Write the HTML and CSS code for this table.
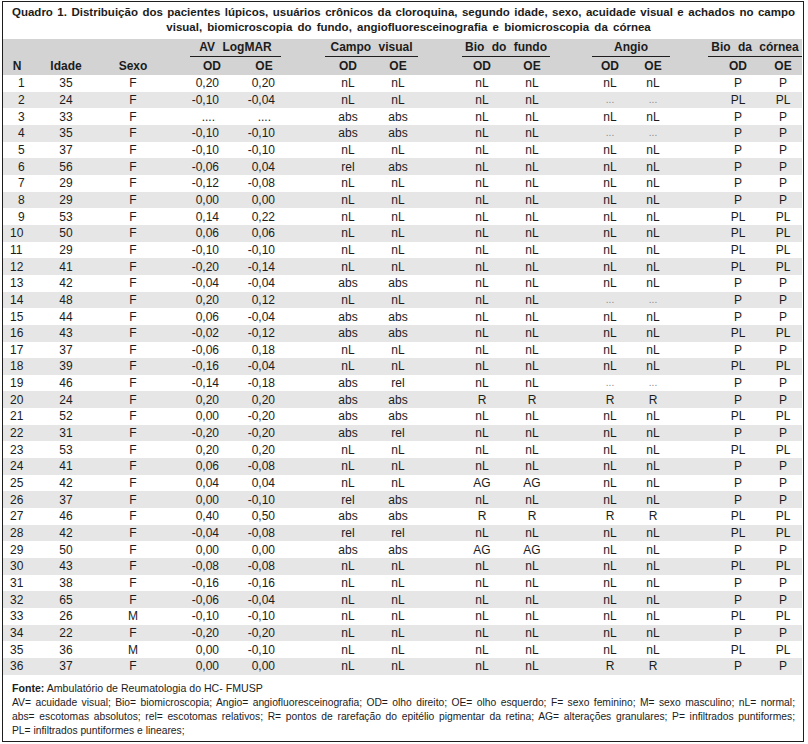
FILE: index.html
```html
<!DOCTYPE html>
<html lang="pt">
<head>
<meta charset="utf-8">
<title>Quadro 1</title>
<link rel="stylesheet" href="styles.css">
</head>
<body>
<div class="frame">
  <div class="title">
    <div class="t1">Quadro 1. Distribuição dos pacientes lúpicos, usuários crônicos da cloroquina, segundo idade, sexo, acuidade visual e achados no campo</div>
    <div class="t2">visual, biomicroscopia do fundo, angiofluoresceinografia e biomicroscopia da córnea</div>
  </div>
  <table class="data">
    <colgroup>
      <col class="w1"><col class="w2"><col class="w3"><col class="w4"><col class="w5"><col class="w6"><col class="w7"><col class="w8"><col class="w9"><col class="w10"><col class="w11"><col class="w12"><col class="w13">
    </colgroup>
    <thead>
      <tr class="ga">
        <th></th><th></th><th></th>
        <th colspan="2"><div class="grp g-av">AV LogMAR</div></th>
        <th colspan="2"><div class="grp g-cv">Campo visual</div></th>
        <th colspan="2"><div class="grp g-bf">Bio do fundo</div></th>
        <th colspan="2"><div class="grp g-an">Angio</div></th>
        <th colspan="2"><div class="grp g-bc">Bio da córnea</div></th>
      </tr>
      <tr class="gb">
        <th>N</th><th>Idade</th><th>Sexo</th>
        <th>OD</th><th>OE</th><th>OD</th><th>OE</th><th>OD</th><th>OE</th><th>OD</th><th>OE</th><th>OD</th><th>OE</th>
      </tr>
    </thead>
    <tbody>
      <tr><td class="u">1</td><td>35</td><td>F</td><td>0,20</td><td>0,20</td><td>nL</td><td>nL</td><td>nL</td><td>nL</td><td>nL</td><td>nL</td><td>P</td><td>P</td></tr>
      <tr><td class="u">2</td><td>24</td><td>F</td><td>-0,10</td><td>-0,04</td><td>nL</td><td>nL</td><td>nL</td><td>nL</td><td class="dots">...</td><td class="dots">...</td><td>PL</td><td>PL</td></tr>
      <tr><td class="u">3</td><td>33</td><td>F</td><td class="na">....</td><td class="na">....</td><td>abs</td><td>abs</td><td>nL</td><td>nL</td><td>nL</td><td>nL</td><td>P</td><td>P</td></tr>
      <tr><td class="u">4</td><td>35</td><td>F</td><td>-0,10</td><td>-0,10</td><td>abs</td><td>abs</td><td>nL</td><td>nL</td><td class="dots">...</td><td class="dots">...</td><td>P</td><td>P</td></tr>
      <tr><td class="u">5</td><td>37</td><td>F</td><td>-0,10</td><td>-0,10</td><td>nL</td><td>nL</td><td>nL</td><td>nL</td><td>nL</td><td>nL</td><td>P</td><td>P</td></tr>
      <tr><td class="u">6</td><td>56</td><td>F</td><td>-0,06</td><td>0,04</td><td>rel</td><td>abs</td><td>nL</td><td>nL</td><td>nL</td><td>nL</td><td>P</td><td>P</td></tr>
      <tr><td class="u">7</td><td>29</td><td>F</td><td>-0,12</td><td>-0,08</td><td>nL</td><td>nL</td><td>nL</td><td>nL</td><td>nL</td><td>nL</td><td>P</td><td>P</td></tr>
      <tr><td class="u">8</td><td>29</td><td>F</td><td>0,00</td><td>0,00</td><td>nL</td><td>nL</td><td>nL</td><td>nL</td><td>nL</td><td>nL</td><td>P</td><td>P</td></tr>
      <tr><td class="u">9</td><td>53</td><td>F</td><td>0,14</td><td>0,22</td><td>nL</td><td>nL</td><td>nL</td><td>nL</td><td>nL</td><td>nL</td><td>PL</td><td>PL</td></tr>
      <tr><td>10</td><td>50</td><td>F</td><td>0,06</td><td>0,06</td><td>nL</td><td>nL</td><td>nL</td><td>nL</td><td>nL</td><td>nL</td><td>PL</td><td>PL</td></tr>
      <tr><td>11</td><td>29</td><td>F</td><td>-0,10</td><td>-0,10</td><td>nL</td><td>nL</td><td>nL</td><td>nL</td><td>nL</td><td>nL</td><td>PL</td><td>PL</td></tr>
      <tr><td>12</td><td>41</td><td>F</td><td>-0,20</td><td>-0,14</td><td>nL</td><td>nL</td><td>nL</td><td>nL</td><td>nL</td><td>nL</td><td>PL</td><td>PL</td></tr>
      <tr><td>13</td><td>42</td><td>F</td><td>-0,04</td><td>-0,04</td><td>abs</td><td>abs</td><td>nL</td><td>nL</td><td>nL</td><td>nL</td><td>P</td><td>P</td></tr>
      <tr><td>14</td><td>48</td><td>F</td><td>0,20</td><td>0,12</td><td>nL</td><td>nL</td><td>nL</td><td>nL</td><td class="dots">...</td><td class="dots">...</td><td>P</td><td>P</td></tr>
      <tr><td>15</td><td>44</td><td>F</td><td>0,06</td><td>-0,04</td><td>abs</td><td>abs</td><td>nL</td><td>nL</td><td>nL</td><td>nL</td><td>P</td><td>P</td></tr>
      <tr><td>16</td><td>43</td><td>F</td><td>-0,02</td><td>-0,12</td><td>abs</td><td>abs</td><td>nL</td><td>nL</td><td>nL</td><td>nL</td><td>PL</td><td>PL</td></tr>
      <tr><td>17</td><td>37</td><td>F</td><td>-0,06</td><td>0,18</td><td>nL</td><td>nL</td><td>nL</td><td>nL</td><td>nL</td><td>nL</td><td>P</td><td>P</td></tr>
      <tr><td>18</td><td>39</td><td>F</td><td>-0,16</td><td>-0,04</td><td>nL</td><td>nL</td><td>nL</td><td>nL</td><td>nL</td><td>nL</td><td>PL</td><td>PL</td></tr>
      <tr><td>19</td><td>46</td><td>F</td><td>-0,14</td><td>-0,18</td><td>abs</td><td>rel</td><td>nL</td><td>nL</td><td class="dots">...</td><td class="dots">...</td><td>P</td><td>P</td></tr>
      <tr><td>20</td><td>24</td><td>F</td><td>0,20</td><td>0,20</td><td>abs</td><td>abs</td><td>R</td><td>R</td><td>R</td><td>R</td><td>P</td><td>P</td></tr>
      <tr><td>21</td><td>52</td><td>F</td><td>0,00</td><td>-0,20</td><td>abs</td><td>abs</td><td>nL</td><td>nL</td><td>nL</td><td>nL</td><td>PL</td><td>PL</td></tr>
      <tr><td>22</td><td>31</td><td>F</td><td>-0,20</td><td>-0,20</td><td>abs</td><td>rel</td><td>nL</td><td>nL</td><td>nL</td><td>nL</td><td>P</td><td>P</td></tr>
      <tr><td>23</td><td>53</td><td>F</td><td>0,20</td><td>0,20</td><td>nL</td><td>nL</td><td>nL</td><td>nL</td><td>nL</td><td>nL</td><td>PL</td><td>PL</td></tr>
      <tr><td>24</td><td>41</td><td>F</td><td>0,06</td><td>-0,08</td><td>nL</td><td>nL</td><td>nL</td><td>nL</td><td>nL</td><td>nL</td><td>P</td><td>P</td></tr>
      <tr><td>25</td><td>42</td><td>F</td><td>0,04</td><td>0,04</td><td>nL</td><td>nL</td><td>AG</td><td>AG</td><td>nL</td><td>nL</td><td>P</td><td>P</td></tr>
      <tr><td>26</td><td>37</td><td>F</td><td>0,00</td><td>-0,10</td><td>rel</td><td>abs</td><td>nL</td><td>nL</td><td>nL</td><td>nL</td><td>P</td><td>P</td></tr>
      <tr><td>27</td><td>46</td><td>F</td><td>0,40</td><td>0,50</td><td>abs</td><td>abs</td><td>R</td><td>R</td><td>R</td><td>R</td><td>PL</td><td>PL</td></tr>
      <tr><td>28</td><td>42</td><td>F</td><td>-0,04</td><td>-0,08</td><td>rel</td><td>rel</td><td>nL</td><td>nL</td><td>nL</td><td>nL</td><td>PL</td><td>PL</td></tr>
      <tr><td>29</td><td>50</td><td>F</td><td>0,00</td><td>0,00</td><td>abs</td><td>abs</td><td>AG</td><td>AG</td><td>nL</td><td>nL</td><td>P</td><td>P</td></tr>
      <tr><td>30</td><td>43</td><td>F</td><td>-0,08</td><td>-0,08</td><td>nL</td><td>nL</td><td>nL</td><td>nL</td><td>nL</td><td>nL</td><td>PL</td><td>PL</td></tr>
      <tr><td>31</td><td>38</td><td>F</td><td>-0,16</td><td>-0,16</td><td>nL</td><td>nL</td><td>nL</td><td>nL</td><td>nL</td><td>nL</td><td>P</td><td>P</td></tr>
      <tr><td>32</td><td>65</td><td>F</td><td>-0,06</td><td>-0,04</td><td>nL</td><td>nL</td><td>nL</td><td>nL</td><td>nL</td><td>nL</td><td>P</td><td>P</td></tr>
      <tr><td>33</td><td>26</td><td>M</td><td>-0,10</td><td>-0,10</td><td>nL</td><td>nL</td><td>nL</td><td>nL</td><td>nL</td><td>nL</td><td>PL</td><td>PL</td></tr>
      <tr><td>34</td><td>22</td><td>F</td><td>-0,20</td><td>-0,20</td><td>nL</td><td>nL</td><td>nL</td><td>nL</td><td>nL</td><td>nL</td><td>P</td><td>P</td></tr>
      <tr><td>35</td><td>36</td><td>M</td><td>0,00</td><td>-0,10</td><td>nL</td><td>nL</td><td>nL</td><td>nL</td><td>nL</td><td>nL</td><td>PL</td><td>PL</td></tr>
      <tr><td>36</td><td>37</td><td>F</td><td>0,00</td><td>0,00</td><td>nL</td><td>nL</td><td>nL</td><td>nL</td><td>R</td><td>R</td><td>P</td><td>P</td></tr>
    </tbody>
  </table>
  <div class="foot">
    <div class="source"><b>Fonte:</b> Ambulatório de Reumatologia do HC- FMUSP</div>
    <div class="legend">
      <div class="ln">AV= acuidade visual; Bio= biomicroscopia; Angio= angiofluoresceinografia; OD= olho direito; OE= olho esquerdo; F= sexo feminino; M= sexo masculino; nL= normal;</div>
      <div class="ln">abs= escotomas absolutos; rel= escotomas relativos; R= pontos de rarefação do epitélio pigmentar da retina; AG= alterações granulares; P= infiltrados puntiformes;</div>
      <div class="ln last">PL= infiltrados puntiformes e lineares;</div>
    </div>
  </div>
</div>
</body>
</html>
```

FILE: styles.css
```css
html, body {
  margin: 0;
  padding: 0;
  background: #ffffff;
}

body {
  font-family: "Liberation Sans", Arial, sans-serif;
  color: #1c1c1c;
}

.frame {
  margin: 1px 0 0 2px;
  width: 800px;
  border: 1px solid #1e1e1e;
  background: #ffffff;
}

.title {
  padding: 3px 8px 4px 9px;
  font-weight: bold;
  font-size: 11.5px;
  line-height: 15px;
  word-spacing: 1px;
}

.t1 {
  text-align: justify;
  text-align-last: justify;
}

.t2 {
  text-align: center;
  padding-left: 10px;
  word-spacing: 2px;
}

.data {
  border-collapse: collapse;
  table-layout: fixed;
  width: 799px;
  font-size: 12px;
}

.w1 { width: 28px; }
.w2 { width: 70px; }
.w3 { width: 64px; }
.w4 { width: 73px; }
.w5 { width: 52px; }
.w6 { width: 83px; }
.w7 { width: 50px; }
.w8 { width: 84px; }
.w9 { width: 50px; }
.w10 { width: 74px; }
.w11 { width: 44px; }
.w12 { width: 86px; }
.w13 { width: 41px; }

.data th,
.data td {
  padding: 0;
  white-space: nowrap;
  overflow: visible;
}

.data thead {
  background: #d3d3d3;
}

.data th {
  font-weight: bold;
  font-size: 12px;
  text-align: center;
}

.ga th {
  height: 18px;
  vertical-align: bottom;
}

.gb th {
  height: 18px;
  line-height: 18px;
}

.grp {
  line-height: 17px;
  border-bottom: 1px solid #1e1e1e;
  word-spacing: 4px;
}

.g-av { margin: 0 9px 0 25px; }
.g-cv { margin: 0 5px 0 35px; }
.g-bf { margin: 0 7px 0 39px; }
.g-an { margin: 0 5px 0 35px; }
.g-bc { margin: 0 0 0 33px; }

.gb th:nth-child(4) { padding-left: 21px; }
.gb th:nth-child(6) { padding-left: 33px; }
.gb th:nth-child(8) { padding-left: 34px; }
.gb th:nth-child(10) { padding-left: 32px; }
.gb th:nth-child(12) { padding-left: 40px; }
.gb th:nth-child(13) { padding-left: 3px; }

.data tbody td {
  height: 16.667px;
  line-height: 16px;
  text-align: center;
}

.data tbody tr:nth-child(even) {
  background: #e6e6e6;
}

.data tbody td:nth-child(1) {
  text-align: left;
  padding-left: 7px;
}

.data tbody td.u {
  padding-left: 15px;
}

.data tbody td:nth-child(4) {
  text-align: right;
  padding-right: 19px;
}

.data tbody td:nth-child(5) {
  text-align: right;
  padding-right: 15px;
}

.data tbody td.na:nth-child(4) { padding-right: 23px; }
.data tbody td.na:nth-child(5) { padding-right: 19px; }

.data tbody td:nth-child(6) { padding-left: 33px; }
.data tbody td:nth-child(8) { padding-left: 34px; }
.data tbody td:nth-child(10) { padding-left: 32px; }
.data tbody td:nth-child(12) { padding-left: 40px; }
.data tbody td:nth-child(13) { padding-left: 3px; }

.data tbody td.dots {
  color: #8a8a8a;
  font-size: 10px;
}

.foot {
  padding: 6px 8px 3px 9px;
  font-size: 10.3px;
  line-height: 14px;
}

.source {
  margin-bottom: 1px;
  font-size: 10.6px;
}

.source b {
  font-weight: bold;
}

.ln {
  white-space: nowrap;
  text-align: justify;
  text-align-last: justify;
}

.ln.last {
  text-align-last: left;
}
```
